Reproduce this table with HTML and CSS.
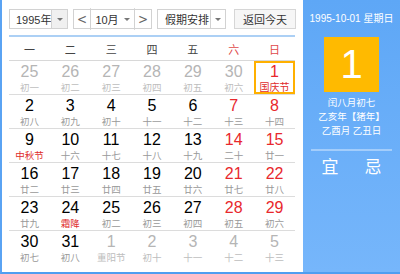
FILE: index.html
```html
<!DOCTYPE html>
<html lang="zh-CN">
<head>
<meta charset="utf-8">
<title>万年历</title>
<link rel="stylesheet" href="styles.css">
</head>
<body>
<div class="cal">
  <div class="main">
    <div class="toolbar">
      <div class="select year"><span class="label">1995年</span><span class="arrow arrow-grey"><i class="tri"></i></span></div>
      <div class="select month"><span class="nav">&lt;</span><span class="label mlabel">10月<i class="tri"></i></span><span class="nav">&gt;</span></div>
      <div class="select holiday"><span class="label">假期安排</span><span class="arrow"><i class="tri"></i></span></div>
      <div class="today">返回今天</div>
    </div>
    <div class="rule"></div>
    <div class="week">
      <span>一</span><span>二</span><span>三</span><span>四</span><span>五</span><span class="we">六</span><span class="we">日</span>
    </div>
    <div class="grid">
      <div class="row">
        <div class="cell other"><b>25</b><em>初一</em></div>
        <div class="cell other"><b>26</b><em>初二</em></div>
        <div class="cell other"><b>27</b><em>初三</em></div>
        <div class="cell other"><b>28</b><em>初四</em></div>
        <div class="cell other"><b>29</b><em>初五</em></div>
        <div class="cell other"><b>30</b><em>初六</em></div>
        <div class="cell red sel"><b>1</b><em class="fest">国庆节</em></div>
      </div>
      <div class="row">
        <div class="cell"><b>2</b><em>初八</em></div>
        <div class="cell"><b>3</b><em>初九</em></div>
        <div class="cell"><b>4</b><em>初十</em></div>
        <div class="cell"><b>5</b><em>十一</em></div>
        <div class="cell"><b>6</b><em>十二</em></div>
        <div class="cell red"><b>7</b><em>十三</em></div>
        <div class="cell red"><b>8</b><em>十四</em></div>
      </div>
      <div class="row">
        <div class="cell"><b>9</b><em class="fest">中秋节</em></div>
        <div class="cell"><b>10</b><em>十六</em></div>
        <div class="cell"><b>11</b><em>十七</em></div>
        <div class="cell"><b>12</b><em>十八</em></div>
        <div class="cell"><b>13</b><em>十九</em></div>
        <div class="cell red"><b>14</b><em>二十</em></div>
        <div class="cell red"><b>15</b><em>廿一</em></div>
      </div>
      <div class="row">
        <div class="cell"><b>16</b><em>廿二</em></div>
        <div class="cell"><b>17</b><em>廿三</em></div>
        <div class="cell"><b>18</b><em>廿四</em></div>
        <div class="cell"><b>19</b><em>廿五</em></div>
        <div class="cell"><b>20</b><em>廿六</em></div>
        <div class="cell red"><b>21</b><em>廿七</em></div>
        <div class="cell red"><b>22</b><em>廿八</em></div>
      </div>
      <div class="row">
        <div class="cell"><b>23</b><em>廿九</em></div>
        <div class="cell"><b>24</b><em class="fest">霜降</em></div>
        <div class="cell"><b>25</b><em>初二</em></div>
        <div class="cell"><b>26</b><em>初三</em></div>
        <div class="cell"><b>27</b><em>初四</em></div>
        <div class="cell red"><b>28</b><em>初五</em></div>
        <div class="cell red"><b>29</b><em>初六</em></div>
      </div>
      <div class="row last">
        <div class="cell"><b>30</b><em>初七</em></div>
        <div class="cell"><b>31</b><em>初八</em></div>
        <div class="cell other"><b>1</b><em>重阳节</em></div>
        <div class="cell other"><b>2</b><em>初十</em></div>
        <div class="cell other"><b>3</b><em>十一</em></div>
        <div class="cell other"><b>4</b><em>十二</em></div>
        <div class="cell other"><b>5</b><em>十三</em></div>
      </div>
    </div>
  </div>
  <div class="side">
    <div class="date">1995-10-01 星期日</div>
    <div class="big">1</div>
    <div class="lunar">
      <div>闰八月初七</div>
      <div>乙亥年【猪年】</div>
      <div>乙酉月 乙丑日</div>
    </div>
    <div class="sep"></div>
    <div class="yiji"><span>宜</span><span>忌</span></div>
  </div>
</div>
</body>
</html>
```

FILE: styles.css
```css
* { box-sizing: border-box; }
html, body { margin: 0; padding: 0; background: #fff; }
body {
  font-family: Arial, "Liberation Sans", "Noto Sans CJK SC", sans-serif;
  color: #333;
}
.cal {
  width: 400px;
  height: 274px;
  display: flex;
  border-left: 2px solid #5aa3f3;
  border-bottom: 2px solid #4f9ef1;
}
.main {
  width: 301px;
  padding: 9px 6px 0 7px;
  background: #fff;
}
.toolbar {
  display: flex;
  height: 20px;
  font-size: 11px;
  color: #333;
}
.select {
  display: flex;
  border: 1px solid #d2d2d2;
  background: #fff;
  height: 20px;
}
.label { display: flex; align-items: center; white-space: nowrap; }
.year { width: 59px; }
.year .label { flex: none; width: 41px; padding-left: 6px; }
.arrow {
  flex: 1;
  border-left: 1px solid #d2d2d2;
  display: flex; align-items: center; justify-content: center;
}
.arrow-grey { background: #f0f0f0; }
.tri {
  display: inline-block;
  width: 0; height: 0;
  border-left: 3px solid transparent;
  border-right: 3px solid transparent;
  border-top: 3px solid #777;
}
.month { width: 79px; margin-left: 5px; }
.nav {
  width: 17px;
  display: flex; align-items: center; justify-content: center;
  color: #666; font-size: 12px;
  font-family: "DejaVu Sans", sans-serif;
  transform: scaleY(1.2);
}
.month .nav:first-child { border-right: 1px solid #d2d2d2; }
.month .nav:last-child { border-left: 1px solid #d2d2d2; }
.mlabel { flex: 1; justify-content: center; gap: 5px; }
.holiday { width: 69px; margin-left: 5px; }
.holiday .label { flex: none; width: 52px; padding-left: 7px; }
.today {
  width: 62px;
  margin-left: 8px;
  height: 20px;
  border: 1px solid #d6d6d6;
  background: #f6f6f6;
  display: flex; align-items: center; justify-content: center;
}
.rule {
  width: 286px;
  height: 2px;
  margin-top: 6px;
  background: #acd0f5;
}
.week {
  width: 286px;
  height: 24px;
  display: grid;
  grid-template-columns: repeat(7, 1fr);
  align-items: center;
  text-align: center;
  font-size: 11px;
  color: #444;
  border-bottom: 1px solid #d8d8d8;
}
.week .we { color: #e04a4a; }
.grid { width: 286px; }
.row {
  display: grid;
  grid-template-columns: repeat(7, 1fr);
  height: 34px;
  border-bottom: 1px solid #dcdcdc;
}
.row.last { border-bottom: none; }
.cell {
  display: flex;
  flex-direction: column;
  align-items: center;
  padding-top: 2px;
}
.cell b {
  font-weight: normal;
  font-size: 16px;
  line-height: 17px;
  color: #000;
}
.cell em {
  font-style: normal;
  font-size: 9.5px;
  line-height: 11px;
  margin-top: 2px;
  color: #999;
}
.cell.red b { color: #e8282d; }
.cell.other b { color: #b5b5b5; }
.cell.other em { color: #bdbdbd; }
.cell em.fest { color: #e02b2b; }
.cell.sel { box-shadow: inset 0 0 0 2px #ffb000; }
.cell.sel em { font-size: 10px; }
.side {
  flex: 1;
  background: linear-gradient(#5ea7f6, #76b6fb);
  color: #fff;
  display: flex;
  flex-direction: column;
  align-items: center;
}
.date {
  margin-top: 12px;
  font-size: 10px;
  line-height: 14px;
  white-space: nowrap;
}
.big {
  margin-top: 11px;
  width: 55px;
  height: 55px;
  background: #ffba00;
  font-size: 40px;
  line-height: 55px;
  text-align: center;
}
.lunar {
  margin-top: 4px;
  font-size: 9.5px;
  line-height: 14px;
  text-align: center;
}
.sep {
  margin-top: 11px;
  width: 81px;
  height: 2px;
  background: #a3cdfb;
}
.yiji {
  margin-top: 7px;
  width: 60px;
  display: flex;
  justify-content: space-between;
  font-size: 17px;
  line-height: 20px;
}
```
